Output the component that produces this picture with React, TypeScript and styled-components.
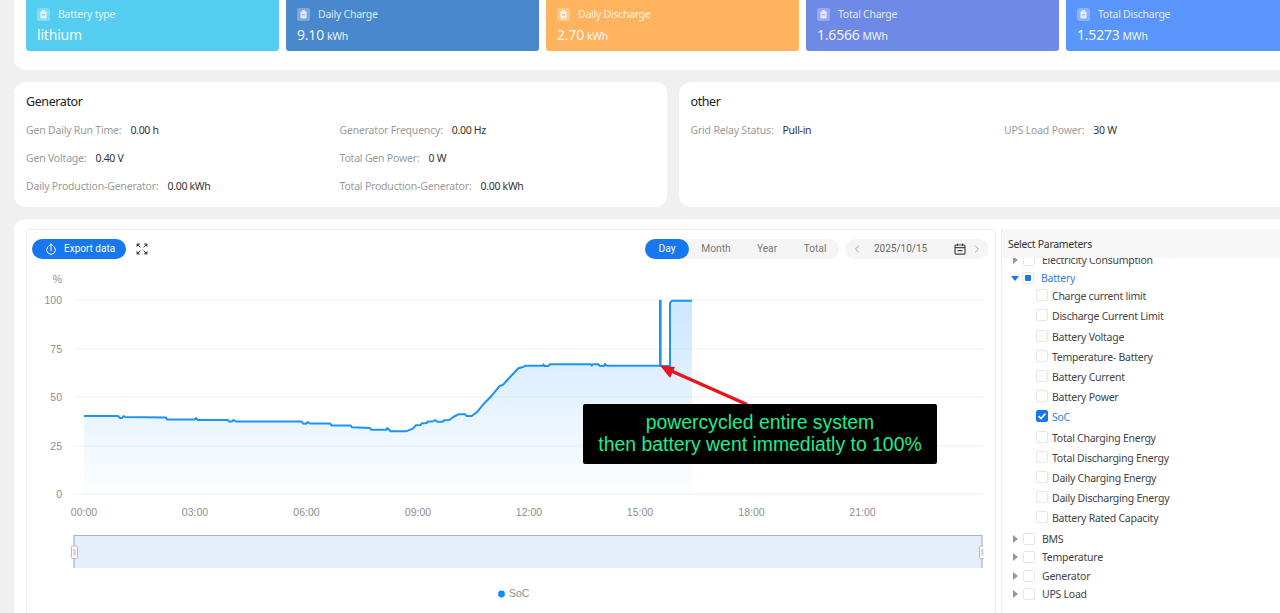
import React from "react";
import styled, { createGlobalStyle } from "styled-components";
import { ChevronLeft, ChevronRight } from "lucide-react";

const GlobalStyle = createGlobalStyle`
  html, body { margin: 0; padding: 0; background: #f0f0f0; overflow: hidden; }
  * { box-sizing: border-box; }
`;

const UI = `"Noto Sans", "Liberation Sans", sans-serif`;
const RB = `Roboto, "Liberation Sans", sans-serif`;
const AR = `"Liberation Sans", Arial, sans-serif`;

const Viewport = styled.div`
  width: 1280px;
  height: 613px;
  overflow: hidden;
`;
const Page = styled.div`
  width: 1317px;
  margin-left: 14px;
  display: flex;
  flex-direction: column;
  gap: 12px;
  font-family: ${UI};
`;
const StatsPanel = styled.section`
  background: #fff;
  border-radius: 0 0 12px 12px;
  padding: 0 12px 19px;
  display: grid;
  grid-template-columns: repeat(5, 253px);
  gap: 7px;
`;
const StatCard = styled.div<{ $bg: string }>`
  height: 51px;
  background: ${(p) => p.$bg};
  border-radius: 0 0 3px 3px;
  padding: 7px 11px 0;
  color: #fff;
`;
const StatHead = styled.div`
  display: flex;
  align-items: center;
  gap: 8px;
  height: 14px;
  font-size: 10.5px;
  letter-spacing: -0.25px;
  color: rgba(255, 255, 255, 0.82);
`;
const StatIcon = styled.span`
  width: 13px;
  height: 13px;
  border-radius: 2px;
  background: rgba(255, 255, 255, 0.28);
  display: flex;
  align-items: center;
  justify-content: center;
`;
const StatValue = styled.div`
  margin-top: 3px;
  font-size: 14px;
  line-height: 22px;
  letter-spacing: -0.2px;
  color: rgba(255, 255, 255, 0.92);
`;
const StatUnit = styled.span`
  font-size: 10.5px;
  letter-spacing: -0.25px;
  margin-left: 3px;
`;
const InfoRow = styled.div`
  display: grid;
  grid-template-columns: 1fr 1fr;
  gap: 12px;
`;
const InfoPanel = styled.section`
  background: #fff;
  border-radius: 12px;
  height: 125px;
  padding: 11px 12px 0;
`;
const InfoTitle = styled.h3`
  margin: 0 0 5px;
  font-size: 12.5px;
  line-height: 18px;
  letter-spacing: -0.4px;
  font-weight: 400;
  color: #222;
`;
const InfoGrid = styled.div`
  display: grid;
  grid-template-columns: 313.5px 1fr;
  grid-auto-rows: 28px;
  align-items: center;
`;
const InfoItem = styled.div`
  font-size: 10.5px;
  letter-spacing: -0.2px;
  color: #9a9a9a;
  white-space: nowrap;
`;
const InfoValue = styled.span`
  color: #333;
  letter-spacing: -0.3px;
  margin-left: 9px;
`;
const ChartPanel = styled.section`
  background: #fff;
  border-radius: 12px 12px 0 0;
  padding: 10px 12px 0;
  display: flex;
  gap: 5px;
  height: 400px;
`;
const ChartBox = styled.div`
  position: relative;
  width: 970px;
  flex: none;
  border: 1px solid #eeeeee;
  border-bottom: none;
  border-radius: 3px 3px 0 0;
`;
const Toolbar = styled.div`
  height: 40px;
  padding: 9px 6px 0 5px;
  display: flex;
  align-items: flex-start;
  font-family: ${RB};
`;
const ExportButton = styled.button`
  width: 94px;
  height: 20px;
  border: none;
  border-radius: 10px;
  background: #1677f0;
  color: #fff;
  font-family: ${RB};
  font-size: 10px;
  display: flex;
  align-items: center;
  gap: 8px;
  padding: 0 0 1px 14px;
`;
const FullscreenButton = styled.span`
  display: flex;
  margin: 4px auto 0 10px;
`;
const Tabs = styled.div`
  display: flex;
  width: 194px;
  height: 20px;
  background: #f5f5f5;
  border-radius: 10px;
`;
const Tab = styled.span<{ $active?: boolean; $w: number }>`
  width: ${(p) => p.$w}px;
  display: flex;
  align-items: center;
  justify-content: center;
  padding-bottom: 1px;
  border-radius: 10px;
  font-size: 10.2px;
  background: ${(p) => (p.$active ? "#1677f0" : "transparent")};
  color: ${(p) => (p.$active ? "#fff" : "#777")};
`;
const DatePill = styled.div`
  margin-left: 6px;
  width: 144px;
  height: 20px;
  background: #f5f5f5;
  border-radius: 10px;
  display: flex;
  align-items: center;
  padding: 0 6px 0 6px;
  color: #777;
`;
const DateText = styled.span`
  font-size: 10px;
  color: #666;
  margin: 0 auto 1px 11px;
`;
const CalendarWrap = styled.span`
  display: flex;
  margin-right: 5px;
`;
const ChartSvg = styled.svg`
  display: block;
`;
const AxisLabel = styled.text`
  font-family: ${AR};
  font-size: 10.5px;
  fill: #8e8e8e;
`;
const Annotation = styled.div`
  position: absolute;
  left: 556px;
  top: 174px;
  width: 354px;
  height: 60px;
  padding-bottom: 3px;
  background: #000;
  border-radius: 2px;
  display: flex;
  flex-direction: column;
  align-items: center;
  justify-content: center;
  font-family: ${AR};
  font-size: 19.4px;
  line-height: 22px;
  color: #1aee8e;
  white-space: nowrap;
`;
const ParamsPanel = styled.aside`
  width: 318px;
  flex: none;
  border-left: 1px solid #eeeeee;
  display: flex;
  flex-direction: column;
`;
const ParamsHeader = styled.div`
  height: 29px;
  background: #f7f7f7;
  padding: 1px 0 0 6px;
  display: flex;
  align-items: center;
  font-size: 10.5px;
  letter-spacing: -0.3px;
  color: #333;
  flex: none;
`;
const TreeViewport = styled.div`
  overflow: hidden;
  flex: 1;
`;
const TreeInner = styled.div`
  margin-top: -7px;
`;
const ParentRow = styled.div<{ $open?: boolean }>`
  height: 18.3px;
  display: flex;
  align-items: center;
  padding-left: ${(p) => (p.$open ? 9 : 11)}px;
  font-size: 10.5px;
  letter-spacing: -0.25px;
  color: ${(p) => (p.$open ? "#2f7fe0" : "#444")};
`;
const Caret = styled.span<{ $open?: boolean }>`
  width: 0;
  height: 0;
  flex: none;
  margin-right: ${(p) => (p.$open ? 3 : 5)}px;
  border-style: solid;
  border-color: transparent;
  ${(p) =>
    p.$open
      ? `border-width: 5px 4.5px 0 4.5px; border-top-color: #1677f0;`
      : `border-width: 4px 0 4px 5px; border-left-color: #999;`}
`;
const Check = styled.span<{ $state?: "on" | "mixed" }>`
  width: 12px;
  height: 12px;
  flex: none;
  border-radius: 2px;
  border: 1px solid ${(p) => (p.$state === "on" ? "#1677f0" : "#e6e6e6")};
  background: ${(p) => (p.$state === "on" ? "#1677f0" : "#fff")};
  display: flex;
  align-items: center;
  justify-content: center;
  margin-right: 7px;
`;
const MixedDot = styled.span`
  width: 6px;
  height: 6px;
  border-radius: 1px;
  background: #1677f0;
`;
const LeafList = styled.div`
  margin: -1.5px 0 1.5px;
`;
const LeafRow = styled.div<{ $on?: boolean }>`
  height: 20.2px;
  display: flex;
  align-items: center;
  padding-left: 34px;
  font-size: 10.5px;
  letter-spacing: -0.25px;
  color: ${(p) => (p.$on ? "#2f7fe0" : "#444")};
  & > span:first-child {
    margin-right: 4px;
    position: relative;
    top: -1px;
  }
`;
const LegendText = styled.text`
  font-family: ${AR};
  font-size: 10.5px;
  fill: #8e8e8e;
`;

const cards = [
  { bg: "#55cdf0", label: "Battery type", value: "lithium", big: true },
  { bg: "#4a88cd", label: "Daily Charge", value: "9.10", unit: "kWh" },
  { bg: "#ffb35f", label: "Daily Discharge", value: "2.70", unit: "kWh" },
  { bg: "#6f8ae6", label: "Total Charge", value: "1.6566", unit: "MWh" },
  { bg: "#5a95fb", label: "Total Discharge", value: "1.5273", unit: "MWh" },
];

const generator: [string, string][] = [
  ["Gen Daily Run Time", "0.00 h"],
  ["Generator Frequency", "0.00 Hz"],
  ["Gen Voltage", "0.40 V"],
  ["Total Gen Power", "0 W"],
  ["Daily Production-Generator", "0.00 kWh"],
  ["Total Production-Generator", "0.00 kWh"],
];
const other: [string, string][] = [
  ["Grid Relay Status", "Pull-in"],
  ["UPS Load Power", "30 W"],
];

const leaves = [
  "Charge current limit",
  "Discharge Current Limit",
  "Battery Voltage",
  "Temperature- Battery",
  "Battery Current",
  "Battery Power",
  "SoC",
  "Total Charging Energy",
  "Total Discharging Energy",
  "Daily Charging Energy",
  "Daily Discharging Energy",
  "Battery Rated Capacity",
];

const line =
  "84,416 118,416 120,418 122,418 123.5,416 125,417 166,417.5 167,419.5 195,419.5 196,418 198,420 228,420 229,421.5 232,421.5 233.5,420 236,421.5 301.7,421.5 303,423.5 306,423.7 307.7,422 310,423.5 330,423.5 331.7,425.5 350.7,425.5 352,427.3 370,428 371,429.7 386.7,429.7 387.3,428 390.7,431.3 406,431.3 413.3,428.3 415.7,425.3 420.7,425 421.7,423.3 426.7,423 427.3,421.7 433.3,421.3 435,420 437.3,421.7 442.7,421.7 444,420.3 449.3,420 453.3,417 458.3,414.3 465,414.3 466.7,416 471.7,416 476.7,412.3 483.3,404.3 491.7,395.7 500,385.7 502.7,385 518.3,368.3 523.3,367 525,365.7 542.7,365.7 543.3,364.3 544.3,366 548.3,366 550,364.3 590.7,364.3 591.7,365.7 592.7,364.3 598.3,364.3 600,366 604,366 605,364 606.7,365.7 660,365.7 660,300.7 660.6,300.7 660.6,366 670,366 670,303 672,300.7 692,300.7";

const gridYs: [number, string][] = [
  [300, "100"],
  [349, "75"],
  [397, "50"],
  [446, "25"],
  [494, "0"],
];
const times: [number, string][] = [
  [84, "00:00"],
  [195, "03:00"],
  [306.5, "06:00"],
  [418, "09:00"],
  [529, "12:00"],
  [640, "15:00"],
  [751.5, "18:00"],
  [862.5, "21:00"],
];

const CardGlyph = () => (
  <svg width="7" height="9" viewBox="0 0 7 9" fill="none">
    <rect x="0.5" y="1.2" width="6" height="7.3" rx="1" fill="rgba(255,255,255,.75)" />
    <rect x="2" y="0" width="3" height="1.2" fill="rgba(255,255,255,.75)" />
    <rect x="2" y="4" width="3" height="1.6" fill="rgba(0,0,0,.18)" />
  </svg>
);

const ExportIcon = () => (
  <svg width="10" height="12" viewBox="0 0 10 12" fill="none" stroke="#fff" strokeWidth="1" strokeLinecap="round" strokeLinejoin="round">
    <path d="M1.5 4.2A4.4 4.4 0 1 0 8.5 4.2" />
    <path d="M5 7.8V1M2.7 3.2 5 .9 7.3 3.2" />
  </svg>
);

const FullscreenIcon = () => (
  <svg width="12" height="12" viewBox="0 0 12 12" fill="#444" stroke="#444" strokeWidth="1">
    <path d="M.8.8h3L.8 3.8zM11.2.8h-3l3 3zM.8 11.2h3l-3-3zM11.2 11.2h-3l3-3z" strokeWidth=".4" />
    <path d="M2 2l2.4 2.4M10 2 7.6 4.4M2 10l2.4-2.4M10 10 7.6 7.6" />
  </svg>
);

const CalendarIcon = () => (
  <svg width="12" height="12" viewBox="0 0 12 12" fill="none" stroke="#444" strokeWidth="1.2">
    <rect x="1" y="2" width="10" height="9.2" rx="1" />
    <path d="M1 4.6h10M3.5 .6v2.4M8.5 .6v2.4M3.6 7.6h4.8" />
  </svg>
);

const CheckMark = () => (
  <svg width="10" height="10" viewBox="0 0 10 10" fill="none" stroke="#fff" strokeWidth="1.6">
    <path d="M1.6 5.2 4 7.5 8.4 2.6" />
  </svg>
);

const InfoBlock = ({ title, items }: { title: string; items: [string, string][] }) => (
  <InfoPanel>
    <InfoTitle>{title}</InfoTitle>
    <InfoGrid>
      {items.map(([k, v]) => (
        <InfoItem key={k}>
          {k}:<InfoValue>{v}</InfoValue>
        </InfoItem>
      ))}
    </InfoGrid>
  </InfoPanel>
);

const Chart = () => (
  <ChartSvg width="968" height="340" viewBox="27 270 968 340">
    <defs>
      <linearGradient id="soc" gradientUnits="userSpaceOnUse" x1="0" y1="300" x2="0" y2="494">
        <stop offset="0" stopColor="#1890ff" stopOpacity="0.22" />
        <stop offset="1" stopColor="#1890ff" stopOpacity="0.01" />
      </linearGradient>
    </defs>
    {gridYs.map(([y, t]) => (
      <g key={t}>
        <line x1="74" x2="983" y1={y} y2={y} stroke="#efefef" />
        <AxisLabel x="62" y={y + 4} textAnchor="end">
          {t}
        </AxisLabel>
      </g>
    ))}
    <AxisLabel x="62" y="283" textAnchor="end">
      %
    </AxisLabel>
    {times.map(([x, t]) => (
      <AxisLabel key={t} x={x} y="516" textAnchor="middle">
        {t}
      </AxisLabel>
    ))}
    <polygon points={`84,494 ${line} 692,494`} fill="url(#soc)" />
    <polyline points={line} fill="none" stroke="#1e94f0" strokeWidth="2" strokeLinejoin="round" />
    <rect x="74" y="535" width="908" height="33" fill="#e5effc" />
    <path d="M74 568V535.5H982V568" fill="none" stroke="#b4b4b4" strokeWidth="1.2" />
    <rect x="71.5" y="546" width="6" height="12.5" rx="1" fill="#fff" stroke="#bcbcbc" />
    <rect x="73.3" y="549" width="2.4" height="6.5" fill="#cfcfcf" />
    <path d="M983.5 546H980.5a1 1 0 0 0-1 1V557.5a1 1 0 0 0 1 1H983.5" fill="#fff" stroke="#bcbcbc" />
    <rect x="981.3" y="549" width="2.2" height="6.5" fill="#cfcfcf" />
    <circle cx="501.5" cy="594" r="3.4" fill="#0a8cfa" />
    <LegendText x="509" y="597">
      SoC
    </LegendText>
    <line x1="747" y1="404.5" x2="668" y2="369.5" stroke="#e8141c" strokeWidth="3.5" />
    <polygon points="660,365.5 675,367 670,378" fill="#e8141c" />
  </ChartSvg>
);

export default function App() {
  return (
    <Viewport>
      <GlobalStyle />
      <Page>
        <StatsPanel>
          {cards.map((c) => (
            <StatCard key={c.label} $bg={c.bg}>
              <StatHead>
                <StatIcon>
                  <CardGlyph />
                </StatIcon>
                {c.label}
              </StatHead>
              <StatValue>
                {c.value}
                {c.unit && <StatUnit>{c.unit}</StatUnit>}
              </StatValue>
            </StatCard>
          ))}
        </StatsPanel>
        <InfoRow>
          <InfoBlock title="Generator" items={generator} />
          <InfoBlock title="other" items={other} />
        </InfoRow>
        <ChartPanel>
          <ChartBox>
            <Toolbar>
              <ExportButton>
                <ExportIcon />
                Export data
              </ExportButton>
              <FullscreenButton>
                <FullscreenIcon />
              </FullscreenButton>
              <Tabs>
                <Tab $active $w={44}>Day</Tab>
                <Tab $w={54}>Month</Tab>
                <Tab $w={48}>Year</Tab>
                <Tab $w={48}>Total</Tab>
              </Tabs>
              <DatePill>
                <ChevronLeft size={12} strokeWidth={1.3} />
                <DateText>2025/10/15</DateText>
                <CalendarWrap>
                  <CalendarIcon />
                </CalendarWrap>
                <ChevronRight size={12} strokeWidth={1.3} />
              </DatePill>
            </Toolbar>
            <Chart />
            <Annotation>
              <span>powercycled entire system</span>
              <span>then battery went immediatly to 100%</span>
            </Annotation>
          </ChartBox>
          <ParamsPanel>
            <ParamsHeader>Select Parameters</ParamsHeader>
            <TreeViewport>
              <TreeInner>
                <ParentRow>
                  <Caret />
                  <Check />
                  Electricity Consumption
                </ParentRow>
                <ParentRow $open>
                  <Caret $open />
                  <Check>
                    <MixedDot />
                  </Check>
                  Battery
                </ParentRow>
                <LeafList>
                  {leaves.map((l) => (
                    <LeafRow key={l} $on={l === "SoC"}>
                      <Check $state={l === "SoC" ? "on" : undefined}>
                        {l === "SoC" && <CheckMark />}
                      </Check>
                      {l}
                    </LeafRow>
                  ))}
                </LeafList>
                {["BMS", "Temperature", "Generator", "UPS Load"].map((p) => (
                  <ParentRow key={p}>
                    <Caret />
                    <Check />
                    {p}
                  </ParentRow>
                ))}
              </TreeInner>
            </TreeViewport>
          </ParamsPanel>
        </ChartPanel>
      </Page>
    </Viewport>
  );
}
